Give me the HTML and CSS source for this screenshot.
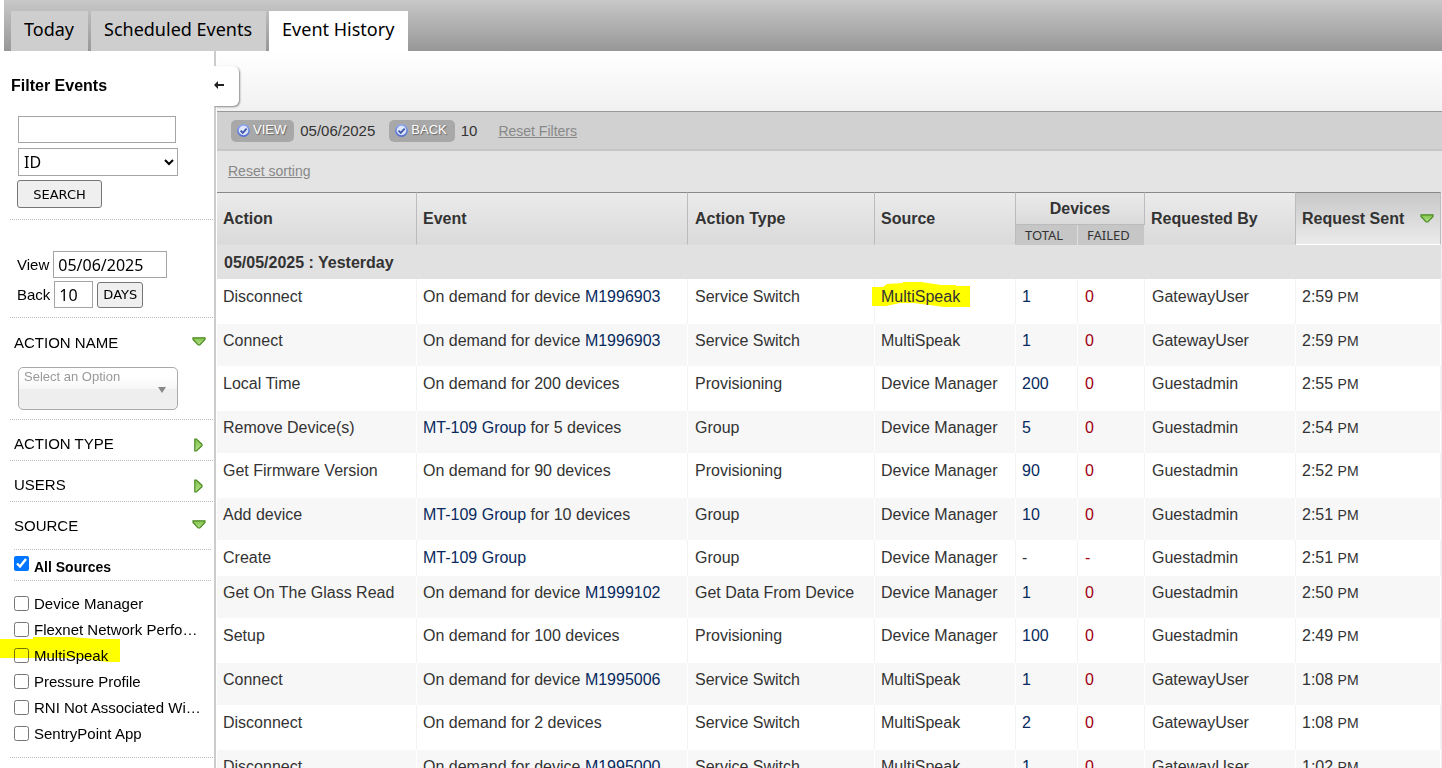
FILE: index.html
```html
<!DOCTYPE html>
<html lang="en">
<head>
<meta charset="utf-8">
<title>Event History</title>
<link rel="stylesheet" href="styles.css">
</head>
<body>
<svg class="defs" aria-hidden="true">
  <defs>
    <linearGradient id="green" x1="0" y1="0" x2="0" y2="1"><stop offset="0" stop-color="#7fc34b"/><stop offset="1" stop-color="#b5e08a"/></linearGradient>
    <linearGradient id="blue" x1="0" y1="0" x2="0" y2="1"><stop offset="0" stop-color="#8fa6ea"/><stop offset="1" stop-color="#5570cf"/></linearGradient>
    <symbol id="down" viewBox="0 0 14 9"><path d="M1 .8h12v1.600L7.800 8H6.200L1 2.400z" fill="url(#green)" stroke="#4c8a22" stroke-width="1.200"/></symbol>
    <symbol id="right" viewBox="0 0 9 14"><path d="M.8 1h1.600L8 6.200v1.600L2.400 13H.8z" fill="url(#green)" stroke="#4c8a22" stroke-width="1.200"/></symbol>
    <symbol id="check" viewBox="0 0 12 12"><circle cx="6" cy="6" r="5.200" fill="#dfe6fa" stroke="url(#blue)" stroke-width="1.600"/><path d="M3.300 6.200l2 2 3.600-4" fill="none" stroke="#3f57ad" stroke-width="1.700"/></symbol>
  </defs>
</svg>
<nav class="tabs">
  <a href="#today">Today</a>
  <a href="#scheduled">Scheduled Events</a>
  <a href="#history" class="active" aria-current="page">Event History</a>
</nav>
<div class="layout">
  <aside class="sidebar">
    <button class="collapse" type="button" aria-label="Hide filters"><svg width="11" height="8" viewBox="0 0 11 8"><path d="M0 4l4-4v3h6v2H4v3z" fill="#222"/></svg></button>
    <h2>Filter Events</h2>
    <form class="search">
      <input class="field term" type="text" aria-label="Search term">
      <select class="field kind" aria-label="Search by"><option>ID</option></select>
      <button class="btn wide" type="button">SEARCH</button>
    </form>
    <form class="range">
      <div class="line"><label for="view">View</label><input class="field date" id="view" type="text" value="05/06/2025"></div>
      <div class="line"><label for="back">Back</label><input class="field count" id="back" type="text" value="10"><button class="btn" type="button">DAYS</button></div>
    </form>
    <section class="group open">
      <button class="toggle" type="button">ACTION NAME<svg width="14" height="9"><use href="#down"/></svg></button>
      <button class="chooser" type="button">Select an Option<svg width="10" height="8" viewBox="0 0 10 8"><path d="M1 1h8L5 7z" fill="#888"/></svg></button>
    </section>
    <section class="group"><button class="toggle" type="button">ACTION TYPE<svg width="9" height="14"><use href="#right"/></svg></button></section>
    <section class="group"><button class="toggle" type="button">USERS<svg width="9" height="14"><use href="#right"/></svg></button></section>
    <section class="group sources">
      <button class="toggle" type="button">SOURCE<svg width="14" height="9"><use href="#down"/></svg></button>
      <label class="all"><input type="checkbox" checked><span>All Sources</span></label>
      <ul>
        <li><label><input type="checkbox"><span>Device Manager</span></label></li>
        <li><label><input type="checkbox"><span>Flexnet Network Perfo…</span></label></li>
        <li class="marked"><svg class="marker" width="120" height="27" viewBox="0 0 120 27"><path d="M0 3h33V1h36l29 2h22v23H108l-8-1-20-3H0z" fill="#ff0"/></svg><label><input class="tinted" type="checkbox"><span>MultiSpeak</span></label></li>
        <li><label><input type="checkbox"><span>Pressure Profile</span></label></li>
        <li><label><input type="checkbox"><span>RNI Not Associated Wi…</span></label></li>
        <li><label><input type="checkbox"><span>SentryPoint App</span></label></li>
      </ul>
    </section>
  </aside>
  <main class="content">
    <div class="shade"></div>
    <div class="filters">
      <button class="pill" type="button"><svg width="13" height="13"><use href="#check"/></svg><span>VIEW</span></button><span class="value">05/06/2025</span>
      <button class="pill" type="button"><svg width="13" height="13"><use href="#check"/></svg><span>BACK</span></button><span class="value">10</span>
      <a href="#filters">Reset Filters</a>
    </div>
    <div class="sorting"><a href="#sorting">Reset sorting</a></div>
    <table>
      <colgroup><col class="c-action"><col><col class="c-type"><col class="c-source"><col class="c-total"><col class="c-failed"><col class="c-by"><col class="c-sent"></colgroup>
      <thead>
        <tr class="head"><th rowspan="2">Action</th><th rowspan="2">Event</th><th rowspan="2">Action Type</th><th rowspan="2">Source</th><th colspan="2" class="devices">Devices</th><th rowspan="2">Requested By</th><th rowspan="2" class="sorted"><span class="sort">Request Sent<svg width="14" height="9"><use href="#down"/></svg></span></th></tr>
        <tr class="subhead"><th>TOTAL</th><th>FAILED</th></tr>
      </thead>
      <tbody>
        <tr class="day"><th colspan="8">05/05/2025 : Yesterday</th></tr>
        <tr><td>Disconnect</td><td>On demand for device <a href="#d">M1996903</a></td><td>Service Switch</td><td><span class="hl"><svg class="marker" width="98" height="26" viewBox="0 0 98 26"><path d="M0 5h11l4-3 16-1V0h18l20 3h15v1h14v21H72l-15-2-15-2H28l-14 3H0z" fill="#ff0"/></svg><span>MultiSpeak</span></span></td><td><a href="#t">1</a></td><td class="bad">0</td><td>GatewayUser</td><td>2:59 <small>PM</small></td></tr>
        <tr><td>Connect</td><td>On demand for device <a href="#d">M1996903</a></td><td>Service Switch</td><td>MultiSpeak</td><td><a href="#t">1</a></td><td class="bad">0</td><td>GatewayUser</td><td>2:59 <small>PM</small></td></tr>
        <tr><td>Local Time</td><td>On demand for 200 devices</td><td>Provisioning</td><td>Device Manager</td><td><a href="#t">200</a></td><td class="bad">0</td><td>Guestadmin</td><td>2:55 <small>PM</small></td></tr>
        <tr><td>Remove Device(s)</td><td><a href="#g">MT-109 Group</a> for 5 devices</td><td>Group</td><td>Device Manager</td><td><a href="#t">5</a></td><td class="bad">0</td><td>Guestadmin</td><td>2:54 <small>PM</small></td></tr>
        <tr><td>Get Firmware Version</td><td>On demand for 90 devices</td><td>Provisioning</td><td>Device Manager</td><td><a href="#t">90</a></td><td class="bad">0</td><td>Guestadmin</td><td>2:52 <small>PM</small></td></tr>
        <tr><td>Add device</td><td><a href="#g">MT-109 Group</a> for 10 devices</td><td>Group</td><td>Device Manager</td><td><a href="#t">10</a></td><td class="bad">0</td><td>Guestadmin</td><td>2:51 <small>PM</small></td></tr>
        <tr class="short"><td>Create</td><td><a href="#g">MT-109 Group</a></td><td>Group</td><td>Device Manager</td><td>-</td><td class="bad">-</td><td>Guestadmin</td><td>2:51 <small>PM</small></td></tr>
        <tr><td>Get On The Glass Read</td><td>On demand for device <a href="#d">M1999102</a></td><td>Get Data From Device</td><td>Device Manager</td><td><a href="#t">1</a></td><td class="bad">0</td><td>Guestadmin</td><td>2:50 <small>PM</small></td></tr>
        <tr><td>Setup</td><td>On demand for 100 devices</td><td>Provisioning</td><td>Device Manager</td><td><a href="#t">100</a></td><td class="bad">0</td><td>Guestadmin</td><td>2:49 <small>PM</small></td></tr>
        <tr><td>Connect</td><td>On demand for device <a href="#d">M1995006</a></td><td>Service Switch</td><td>MultiSpeak</td><td><a href="#t">1</a></td><td class="bad">0</td><td>GatewayUser</td><td>1:08 <small>PM</small></td></tr>
        <tr><td>Disconnect</td><td>On demand for 2 devices</td><td>Service Switch</td><td>MultiSpeak</td><td><a href="#t">2</a></td><td class="bad">0</td><td>GatewayUser</td><td>1:08 <small>PM</small></td></tr>
        <tr><td>Disconnect</td><td>On demand for device <a href="#d">M1995000</a></td><td>Service Switch</td><td>MultiSpeak</td><td><a href="#t">1</a></td><td class="bad">0</td><td>GatewayUser</td><td>1:02 <small>PM</small></td></tr>
      </tbody>
    </table>
  </main>
</div>
</body>
</html>
```
FILE: styles.css
```css
* { box-sizing: border-box; }
html { height: 100%; }
body { margin: 0; height: 100%; overflow: hidden; display: flex; flex-direction: column; background: #fff; color: #000; font-family: "Liberation Sans", Arial, sans-serif; font-size: 16px; }
button, input, select { font: inherit; color: inherit; margin: 0; }
button { cursor: pointer; }
svg { display: block; flex: none; }
.defs { position: absolute; width: 0; height: 0; }

.tabs { flex: none; display: flex; gap: 3px; margin-left: 4px; padding: 11px 0 0 7px; background: linear-gradient(#c8c8c8, #979797); }
.tabs a { height: 40px; padding: 0 14px 0 13px; line-height: 36px; font-family: "Noto Sans", sans-serif; font-size: 18px; color: #000; text-decoration: none; background: #cecece; }
.tabs a.active { background: #fff; }

.layout { flex: 1; min-height: 0; display: flex; }
.sidebar { position: relative; z-index: 1; flex: none; width: 217px; padding-left: 10px; border-right: 1px solid #fff; box-shadow: inset -2px 0 #ccc; }
.sidebar h2 { margin: 0; padding: 25px 1px 0; font-size: 16px; line-height: 20px; }
.collapse { position: absolute; left: 214px; top: 15px; width: 25px; height: 40px; padding: 0 0 2px; border: 0; border-radius: 0 6px 6px 0; background: #fff; box-shadow: 1px 1px 2px #888; clip-path: inset(-4px -4px -4px 0); }
.field { display: block; height: 27px; padding: 0 4px; border: 1px solid #a5a5a5; border-radius: 0; background: #fff; font-family: "Noto Sans", sans-serif; font-size: 16px; }
.btn { height: 26px; padding: 0 4px; border: 1px solid #767676; border-radius: 3px; background: #efefef; font-family: "DejaVu Sans", sans-serif; font-size: 13px; }
.search { display: flex; flex-direction: column; align-items: flex-start; gap: 5px; width: 203px; padding: 20px 0 11px 8px; border-bottom: 1px dotted #bbb; }
.term { width: 158px; }
.kind { width: 160px; height: 28px; padding: 0 0 0 1px; }
.wide { height: 28px; width: 85px; margin: -1px 0 0 -1px; }
.range { width: 203px; padding: 31px 0 6px 7px; border-bottom: 1px dotted #bbb; }
.line { display: flex; align-items: center; gap: 4px; height: 27px; margin-bottom: 3px; font-size: 15px; }
.date { width: 114px; }
.count { width: 39px; }
.line .btn { padding: 0 5px; }
.group { width: 203px; border-bottom: 1px dotted #bbb; }
.toggle { display: flex; align-items: center; justify-content: space-between; width: 100%; height: 40px; padding: 6px 10px 0 4px; border: 0; background: none; font-size: 15px; }
.toggle svg { margin-top: 4px; }
.toggle svg[width="14"] { margin: 0 -3px 2px 0; }
.open { padding: 0 0 9px; }
.open .toggle { height: 42px; }
.chooser { display: flex; justify-content: space-between; width: 160px; height: 43px; margin: 7px 0 0 8px; padding: 1px 10px 0 5px; border: 1px solid #aaa; border-radius: 5px; background: linear-gradient(#fff 20%, #f6f6f6 50%, #eee 52%, #f0f0f0); color: #999; font-size: 13px; }
.chooser svg { margin-top: 17px; }
.sources .toggle { height: 47px; padding-bottom: 6px; }
.all { display: flex; align-items: center; gap: 5px; height: 32px; margin: 0 2px 9px 4px; border: dotted #bbb; border-width: 1px 0; font-size: 14px; font-weight: bold; }
.all span { padding-top: 4px; }
input[type="checkbox"] { flex: none; width: 15px; height: 15px; }
.all input { margin-bottom: 4px; }
.tinted { mix-blend-mode: multiply; }
ul { margin: 0; padding: 0 0 11px 4px; list-style: none; }
li { height: 26px; font-size: 15px; }
li label { position: relative; display: flex; align-items: center; gap: 5px; height: 26px; white-space: nowrap; }
.marked, .hl { position: relative; }
.marker { position: absolute; left: -14px; top: -6px; }
.hl .marker { left: -9px; top: -6px; }
.hl span { position: relative; }

.content { flex: 1; min-width: 0; overflow: hidden; color: #333; }
.shade { height: 60px; background: linear-gradient(#fff, #f1f1f1); }
.filters { display: flex; align-items: center; height: 40px; padding: 0 14px; border-top: 1px solid #999; border-bottom: 2px solid #c6c6c6; background: #d1d1d1; font-size: 15px; }
.filters a, .sorting a { color: #888; font-size: 14px; }
.pill { display: flex; align-items: center; gap: 3px; height: 22px; padding: 0 8px 0 6px; border: 0; border-radius: 5px; background: #a8a8a8; color: #fff; font-size: 13px; text-shadow: 1px 1px 1px #666; }
.pill span { padding-bottom: 2px; }
.value { margin: 0 14px 0 6px; padding-bottom: 1px; }
.value + a { margin-left: 7px; }
.sorting { display: flex; align-items: center; height: 41px; padding: 0 0 2px 11px; background: #e4e4e4; }
table { width: 100%; table-layout: fixed; border-collapse: separate; border-spacing: 0; border-right: 1px solid #eee; }
.c-action { width: 200px; } .c-type { width: 187px; } .c-source { width: 141px; } .c-total { width: 62px; } .c-failed { width: 67px; } .c-by { width: 151px; } .c-sent { width: 145px; }
th { text-align: left; font-size: 16px; }
.head th { padding: 0 6px; border-top: 1px solid #888; border-right: 1px solid #bbb; border-bottom: 1px solid #ddd; background: linear-gradient(#ebebeb, #dadada); }
.head .devices { height: 33px; text-align: center; border-bottom: 1px solid #bbb; }
.head .sorted { background: linear-gradient(#c8c8c8, #ebebeb); border-bottom-color: #fff; }
.sort { display: flex; align-items: center; justify-content: space-between; }
.subhead th { height: 20px; padding: 0 9px; border-right: 1px solid #ddd; background: #c6c6c6; font: 13px/18px "Noto Sans", sans-serif; }
.day th { height: 34px; padding: 1px 7px 0; background: #e1e1e1; }
td { height: 45px; padding: 8px 6px 0; vertical-align: top; line-height: 20px; border-right: 1px solid #f3f3f3; white-space: nowrap; }
td:nth-child(3), th:nth-child(3), td:nth-child(6), td:nth-child(7) { padding-left: 7px; }
tbody tr:nth-child(odd) td { height: 42px; padding-top: 7px; background: #f7f7f7; border-right-color: #fff; }
tbody .short td { height: 36px; }
td a { color: #082a5e; text-decoration: none; }
td small { font-size: 14px; }
.bad { color: #a00010; }
```
